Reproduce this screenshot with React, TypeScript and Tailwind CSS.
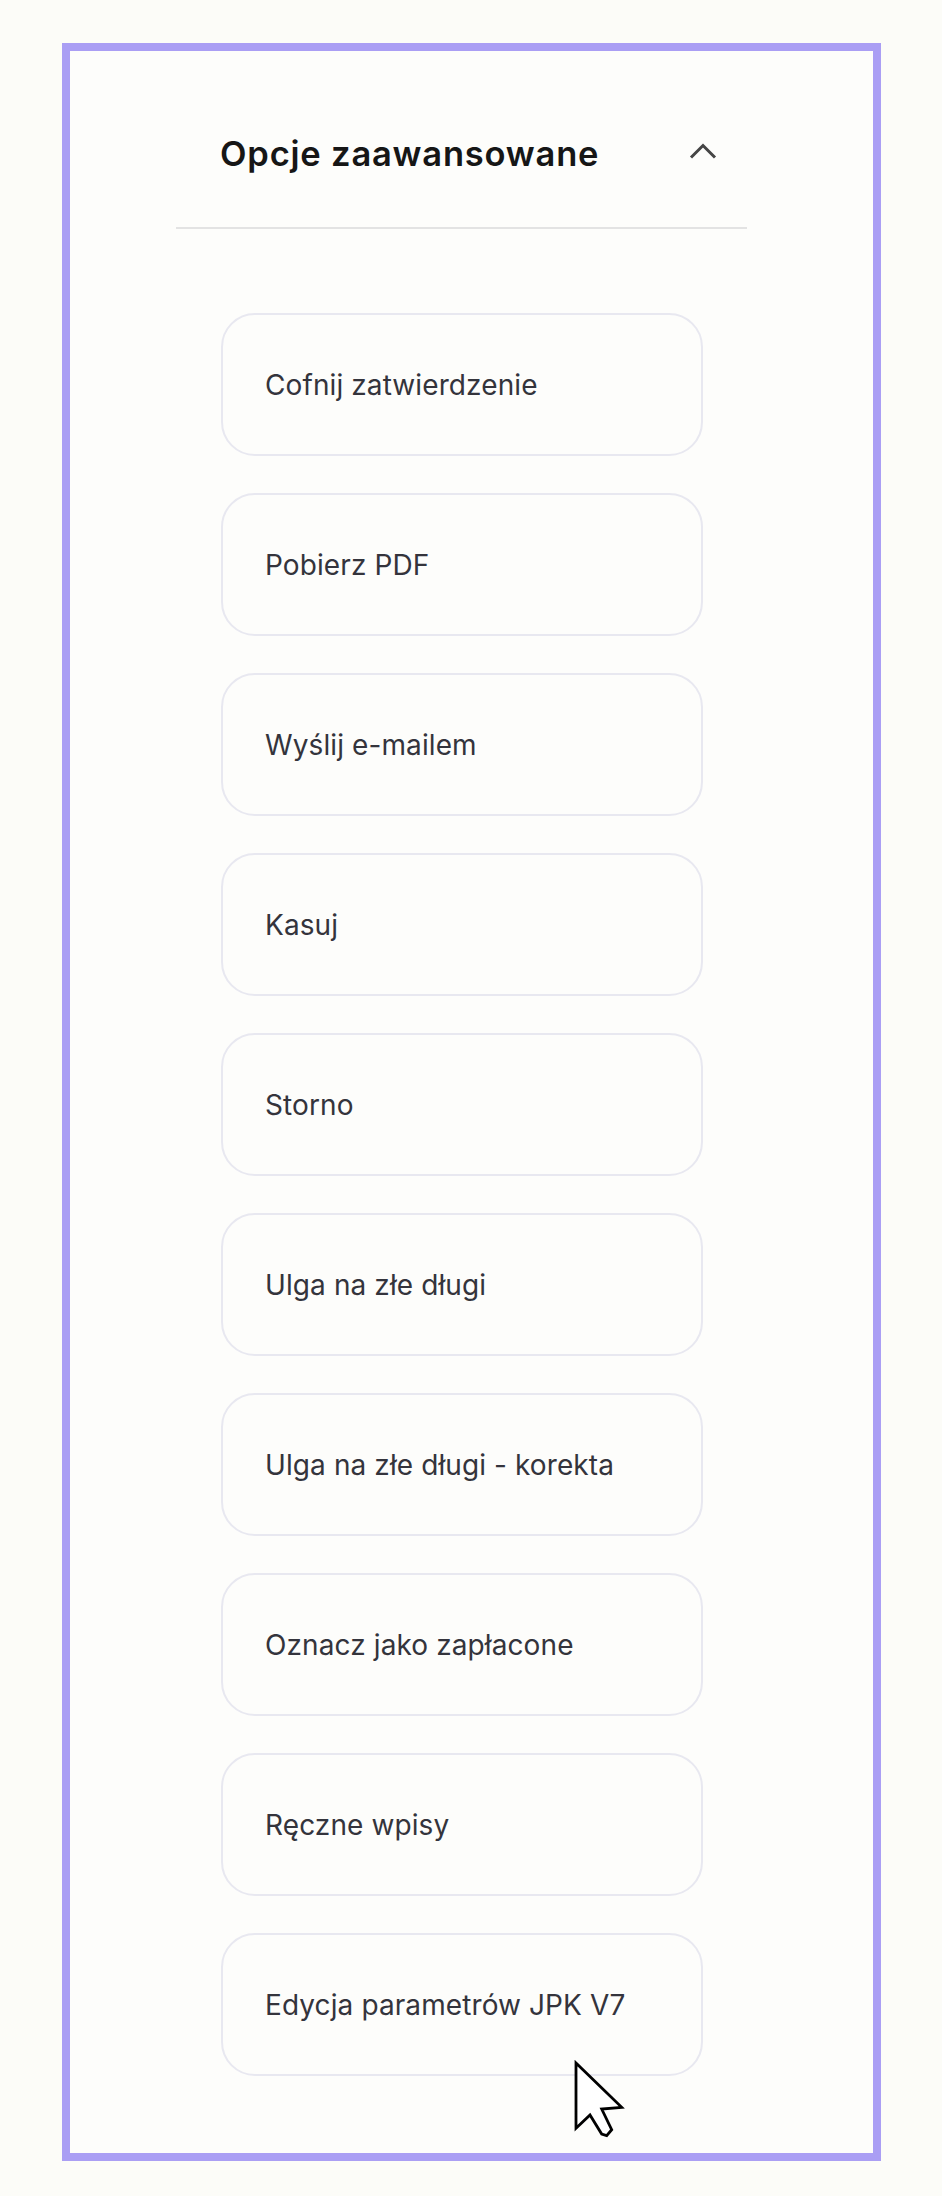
import React from 'react';

const items = [
  'Cofnij zatwierdzenie',
  'Pobierz PDF',
  'Wyślij e-mailem',
  'Kasuj',
  'Storno',
  'Ulga na złe długi',
  'Ulga na złe długi - korekta',
  'Oznacz jako zapłacone',
  'Ręczne wpisy',
  'Edycja parametrów JPK V7',
];

const Cursor = () => (
  <svg width="52" height="80" viewBox="-3 -3 52 80" className="absolute left-[573px] top-[2060px]">
    <polygon
      points="0,0 45.7,44.3 25.7,46 35.7,66.7 30.7,72.7 25.7,71 14,52 0,65.3"
      fill="#ffffff"
      stroke="#000000"
      strokeWidth="2.8"
      strokeLinejoin="miter"
    />
  </svg>
);

const App = () => {
  return (
    <div className="relative w-[942px] min-h-[2196px] bg-[#fcfcf8] pt-[43px] pl-[62px] font-['Inter','Liberation_Sans',sans-serif]">
      <div className="w-[819px] h-[2118px] border-[8px] border-[#aa9ef4] bg-[#fdfdfb]">
        {/* header */}
        <div className="ml-[150px] mt-[83px] w-[497px] flex justify-between items-center">
          <span className="text-[34.5px] leading-[40px] font-semibold tracking-[0.8px] text-[#161616]">Opcje zaawansowane</span>
          <svg width="28" height="16" viewBox="0 0 28 16" className="mt-[-6px]">
            <polyline points="2,14.5 14,2.5 26,14.5" fill="none" stroke="#454545" strokeWidth="3" />
          </svg>
        </div>

        <div className="ml-[106px] mt-[53px] w-[571px] h-[2px] bg-[#e3e3e3]"></div>

        {/* action list */}
        <div className="ml-[151px] mt-[84px] w-[482px] flex flex-col gap-[37px]">
          {items.map(label => (
            <div
              key={label}
              className="h-[143px] rounded-[34px] border-2 border-[#e8e8f0] flex items-center pl-[42px]"
            >
              <span className="text-[28px] tracking-[0.1px] text-[#34343c]">{label}</span>
            </div>
          ))}
        </div>
      </div>
      <Cursor />
    </div>
  );
};

export default App;
